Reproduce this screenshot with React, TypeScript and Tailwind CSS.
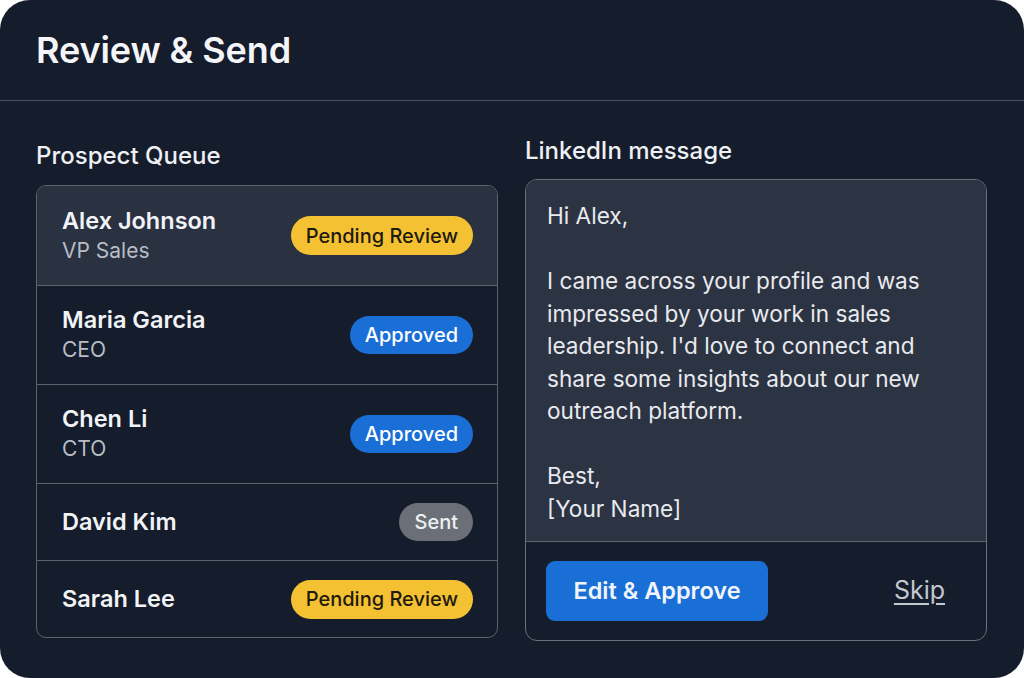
import React from 'react';

type Status = 'pending' | 'approved' | 'sent';

const prospects: { name: string; title?: string; status: Status; active?: boolean }[] = [
  { name: 'Alex Johnson', title: 'VP Sales', status: 'pending', active: true },
  { name: 'Maria Garcia', title: 'CEO', status: 'approved' },
  { name: 'Chen Li', title: 'CTO', status: 'approved' },
  { name: 'David Kim', status: 'sent' },
  { name: 'Sarah Lee', status: 'pending' },
];

const Badge: React.FC<{ status: Status }> = ({ status }) => {
  if (status === 'pending')
    return (
      <span className="rounded-full bg-[#f4c133] px-[15px] h-[39px] flex items-center text-[20px] font-medium text-[#1f1a0e]">
        Pending Review
      </span>
    );
  if (status === 'approved')
    return (
      <span className="rounded-full bg-[#1a6fd6] px-[15px] h-[38px] flex items-center text-[20px] font-medium text-white">
        Approved
      </span>
    );
  return (
    <span className="rounded-full bg-[#6b7078] px-[15px] h-[38px] flex items-center text-[20px] font-medium text-[#eef0f3]">
      Sent
    </span>
  );
};

export default function App() {
  return (
    <div className="w-[1024px] h-[678px] bg-white" style={{ fontFamily: 'Inter, "Noto Sans", sans-serif' }}>
      <div className="w-full h-full rounded-[30px] bg-[#151c2b] overflow-hidden text-white">
        <div className="h-[101px] border-b border-[#4a5160] px-9 flex items-center">
          <h1 className="text-[36px] font-semibold text-[#f3f5f8] tracking-[-0.1px]">Review &amp; Send</h1>
        </div>

        <div className="flex gap-[27px] px-9">
          {/* Queue */}
          <div className="w-[462px]">
            <h2 className="mt-[40px] h-[29px] text-[24px] font-medium text-[#eef0f4] leading-[29px]">Prospect Queue</h2>
            <div className="mt-[15px] border border-[#5b6270] rounded-[10px] overflow-hidden">
              {prospects.map((p, i) => (
                <div
                  key={p.name}
                  className={`flex items-center justify-between pl-[25px] pr-[24px] ${
                    p.title ? 'h-[99px]' : 'h-[77px]'
                  } ${i > 0 ? 'border-t border-[#5b6270]' : ''} ${p.active ? 'bg-[#2a3141]' : ''}`}
                >
                  <div className="flex flex-col">
                    <span className="text-[23.5px] font-semibold text-[#f1f3f6] leading-[30px]">{p.name}</span>
                    {p.title && <span className="text-[21px] text-[#b8bdc6] leading-[30px]">{p.title}</span>}
                  </div>
                  <Badge status={p.status} />
                </div>
              ))}
            </div>
          </div>

          {/* Message */}
          <div className="w-[462px]">
            <h2 className="mt-[35px] h-[29px] text-[24px] font-medium text-[#eef0f4] leading-[29px]">LinkedIn message</h2>
            <div className="mt-[14px] h-[462px] border border-[#6a717e] rounded-[12px] overflow-hidden flex flex-col">
              <div className="h-[362px] bg-[#2c3343] border-b border-[#5b6270] px-[21px] pt-[20px] text-[22.6px] leading-[32.5px] text-[#e8eaee]">
                <p>Hi Alex,</p>
                <p className="mt-[32.5px]">
                  I came across your profile and was impressed by your work in sales leadership. I'd love to connect and
                  share some insights about our new outreach platform.
                </p>
                <p className="mt-[32.5px]">Best,</p>
                <p>[Your Name]</p>
              </div>
              <div className="flex-1 flex items-center justify-between pl-[20px] pr-[41px]">
                <button className="w-[222px] h-[60px] rounded-[9px] bg-[#1a6fd6] text-[23.5px] font-semibold text-[#f1f5fb]">
                  Edit &amp; Approve
                </button>
                <span className="text-[25px] text-[#c3c8d0] underline underline-offset-[4px]">Skip</span>
              </div>
            </div>
          </div>
        </div>
      </div>
    </div>
  );
}
